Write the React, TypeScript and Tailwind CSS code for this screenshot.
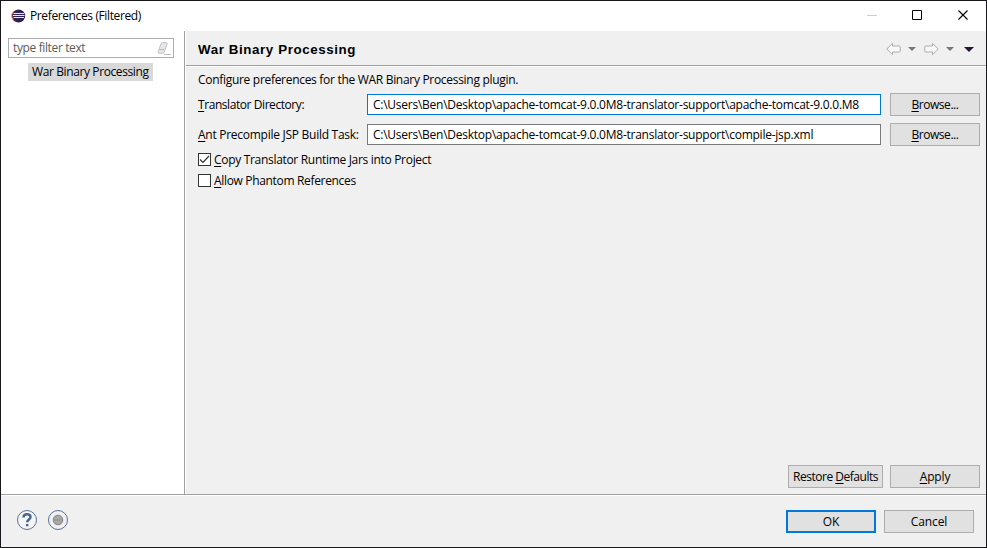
import React from "react";

function Button({ children, className = "" }: { children: React.ReactNode; className?: string }) {
  return (
    <button className={`flex h-[23px] w-[90px] shrink-0 items-center justify-center whitespace-nowrap border border-[#adadad] bg-[#e1e1e1] leading-4 ${className}`}>
      {children}
    </button>
  );
}

function Key({ children }: { children: string }) {
  return <span className="underline decoration-1 underline-offset-2">{children}</span>;
}

function EclipseLogo() {
  return (
    <svg width="15" height="14" viewBox="0 0 15 14">
      <circle cx="6.5" cy="7" r="6.3" fill="#f2994a" />
      <circle cx="7.7" cy="7" r="6.5" fill="#2c2255" />
      <path d="M2.500 4.500h10.500M2 6.500h11.500M2.500 8.500h10.500" stroke="#e8e6f2" strokeWidth="1" />
    </svg>
  );
}

function Arrow({ flip = false }: { flip?: boolean }) {
  return (
    <svg width="15" height="14" viewBox="0 0 15 14" className={flip ? "-scale-x-100" : ""}>
      <path d="M.8 7 6.500 1.200V4h6.700q1 0 1 1v4q0 1-1 1H6.500v2.800Z" fill="#f8f8f8" stroke="#acacac" strokeLinejoin="round" />
    </svg>
  );
}

function Caret({ color, wide = false }: { color: string; wide?: boolean }) {
  return (
    <svg width={wide ? 10 : 8} height={wide ? 5 : 4} viewBox="0 0 8 4" preserveAspectRatio="none">
      <path d="M0 0h8L4 4Z" fill={color} />
    </svg>
  );
}

function TitleBar() {
  return (
    <header className="flex h-[30px] shrink-0 items-center bg-white pl-2.5">
      <EclipseLogo />
      <span className="ml-1 whitespace-nowrap tracking-[-0.38px]">Preferences (Filtered)</span>
      <svg className="-mt-0.5 ml-auto mr-[17px]" width="102" height="12" viewBox="0 0 102 12" fill="none">
        <path d="M0 6.5h10" stroke="#cccccc" />
        <path d="M45.5 1.5h9v9h-9Z" stroke="#000" />
        <path d="m91.5 1.5 9 9m0-9-9 9" stroke="#000" strokeWidth="1.1" />
      </svg>
    </header>
  );
}

function Sidebar() {
  return (
    <aside className="flex w-[184px] shrink-0 flex-col items-start border-r border-[#a0a0a0] bg-white pl-[7px] pt-[7px]">
      <div className="flex h-5 w-[166px] items-center justify-between border border-[#abadb3] pl-1 pr-0.5 text-[#5c5c5c]">
        <span className="tracking-[-0.37px]">type filter text</span>
        <svg width="14" height="13" viewBox="0 0 14 13">
          <path d="M5.3.7h4.2q1 0 .6 1L7.3 10q-.4 1.3-1.5 1.3H2q-1.3 0-.9-1.2L4 1.8Q4.400.7 5.300.7Z" fill="#e6e6e6" stroke="#c2c2c2" />
          <path d="m2.500 7.500 5 .2M7 12.500h7" stroke="#bdbdbd" />
        </svg>
      </div>
      <div className="ml-5 mt-[5px] flex h-[18px] w-[125px] items-center bg-[#d9d9d9] pl-1">
        <span className="whitespace-nowrap tracking-[-0.39px]">War Binary Processing</span>
      </div>
    </aside>
  );
}

function PathRow({ label, value, focused = false }: { label: React.ReactNode; value: string; focused?: boolean }) {
  return (
    <div className="flex h-[23px] items-center">
      <div className="w-[169px] shrink-0 whitespace-nowrap">{label}</div>
      <div className={`mr-[9px] flex h-[21px] w-[514px] items-center whitespace-nowrap border bg-white pl-[5px] ${focused ? "border-[#0078d7]" : "border-[#7a7a7a]"}`}>
        <span className="tracking-[-0.25px]">{value}</span>
      </div>
      <Button><span className="tracking-[-0.45px]"><Key>B</Key>rowse...</span></Button>
    </div>
  );
}

function CheckRow({ checked = false, children }: { checked?: boolean; children: React.ReactNode }) {
  return (
    <div className="flex h-[21px] items-center">
      <span className="mr-[3px] flex size-[13px] items-center justify-center border border-[#333] bg-white">
        {checked && (
          <svg width="11" height="11" viewBox="0 0 11 11" fill="none">
            <path d="m1 5.500 3 3 6-6.500" stroke="#333" strokeWidth="1.2" />
          </svg>
        )}
      </span>
      <span className="whitespace-nowrap">{children}</span>
    </div>
  );
}

export default function App() {
  return (
    <div className="flex h-[548px] w-[987px] flex-col overflow-hidden border border-[#18181c] bg-[#f0f0f0] font-['Open_Sans','Noto_Sans',sans-serif] text-[12px] leading-4 text-black">
      <TitleBar />
      <div className="flex h-[463px] shrink-0">
        <Sidebar />
        <main className="flex flex-1 flex-col border-l border-white">
          <div className="flex h-[35px] shrink-0 items-center border-b border-[#a0a0a0] pl-3 pt-0.5">
            <h1 className="whitespace-nowrap pt-px font-['Liberation_Sans',sans-serif] text-[13.33px] font-bold tracking-[0.6px]">War Binary Processing</h1>
            <div className="ml-auto mr-3 flex items-center">
              <Arrow />
              <span className="ml-[7px] mr-2"><Caret color="#777" /></span>
              <Arrow flip />
              <span className="ml-[7px] mr-2.5"><Caret color="#777" /></span>
              <Caret color="#24123a" wide />
            </div>
          </div>
          <div className="flex flex-1 flex-col border-t border-white pl-3 pt-[5px]">
            <p className="mb-[5px] h-4 whitespace-nowrap tracking-[-0.3px]">Configure preferences for the WAR Binary Processing plugin.</p>
            <PathRow focused label={<span className="tracking-[-0.43px]"><Key>T</Key>ranslator Directory:</span>} value="C:\Users\Ben\Desktop\apache-tomcat-9.0.0M8-translator-support\apache-tomcat-9.0.0.M8" />
            <div className="h-[7px]" />
            <PathRow label={<span className="tracking-[-0.27px]"><Key>A</Key>nt Precompile JSP Build Task:</span>} value="C:\Users\Ben\Desktop\apache-tomcat-9.0.0M8-translator-support\compile-jsp.xml" />
            <div className="mt-[3px]">
              <CheckRow checked><span className="tracking-[-0.31px]"><Key>C</Key>opy Translator Runtime Jars into Project</span></CheckRow>
              <CheckRow><span className="tracking-[-0.33px]"><Key>A</Key>llow Phantom References</span></CheckRow>
            </div>
            <div className="mb-1.5 mr-1.5 mt-auto flex justify-end gap-[7px]">
              <Button className="w-[95px]!"><span className="tracking-[-0.48px]">Restore <Key>D</Key>efaults</span></Button>
              <Button><span className="tracking-[-0.15px]"><Key>A</Key>pply</span></Button>
            </div>
          </div>
        </main>
      </div>
      <footer className="flex flex-1 items-start border-t border-[#a0a0a0] pl-4 pr-3 pt-[15px] shadow-[inset_0_1px_0_white]">
        <svg width="52" height="20" viewBox="0 0 52 20" fill="none">
          <circle cx="10" cy="10" r="9.500" fill="#f5f5f5" stroke="#5b7196" />
          <path d="M6.500 7.500C6.500 3.200 13.500 3.200 13.500 7c0 2.600-3.300 2.400-3.300 5.300" stroke="#4c6590" strokeWidth="2.500" />
          <path d="M8.900 14h2.500v2.300H8.900Z" fill="#4c6590" />
          <circle cx="41" cy="10" r="9.500" fill="#f0f0f0" stroke="#5b7196" />
          <circle cx="41" cy="10" r="4.800" fill="#a8a8a8" stroke="#858585" />
          <path d="M37 10h8" stroke="#8f8f8f" />
        </svg>
        <div className="ml-auto flex gap-2">
          <Button className="border-2! border-[#0078d7]!">OK</Button>
          <Button><span className="tracking-[-0.1px]">Cancel</span></Button>
        </div>
      </footer>
    </div>
  );
}
